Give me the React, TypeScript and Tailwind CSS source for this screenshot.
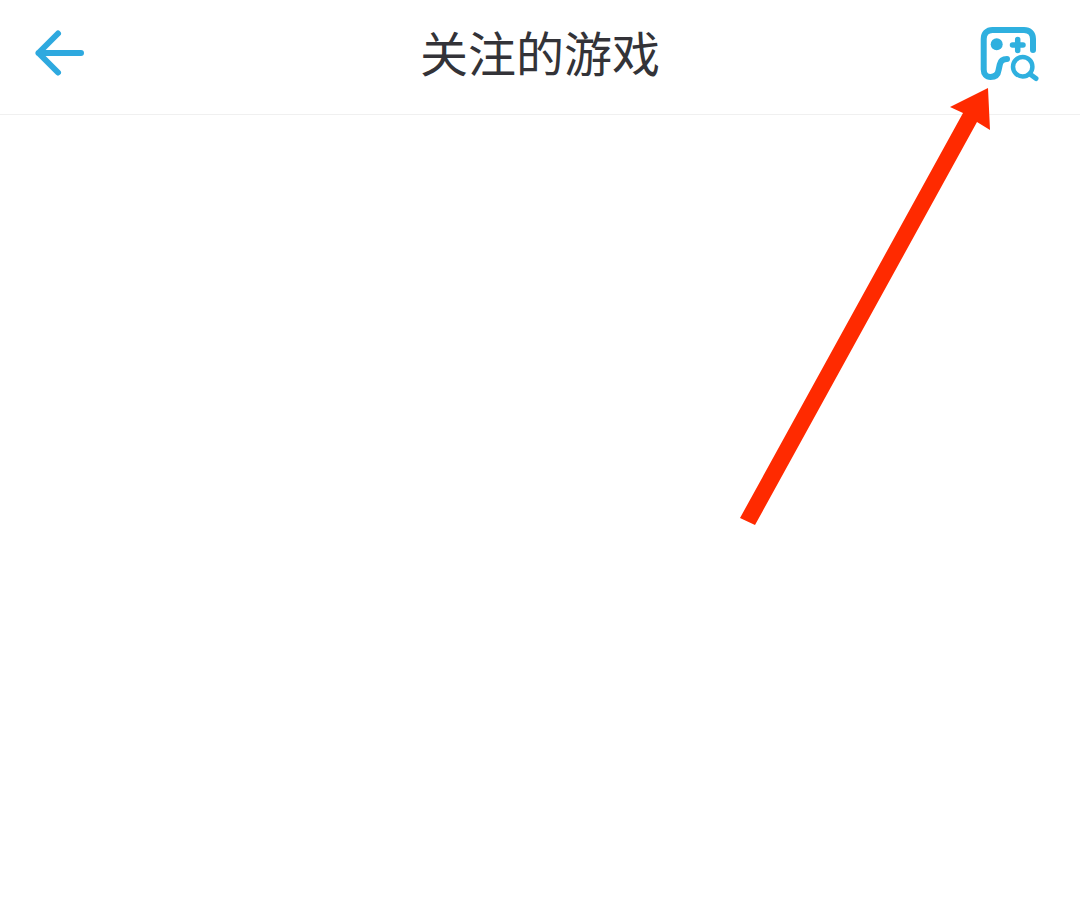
export default function App() {
  return (
    <div className="relative h-[918px] w-[1080px] overflow-hidden bg-white font-['Noto_Sans_CJK_SC','Liberation_Sans',sans-serif]">
      <header className="grid h-[115px] grid-cols-[1fr_auto_1fr] items-center border-b border-[#f0f0f0] px-[38px]">
        <svg width="56" height="56" viewBox="0 0 56 56" fill="none" className="-ml-[6px] -mt-[4px]">
          <path
            d="M6.5 26H49M26 6.5 6.5 26 26 45.5"
            stroke="#2ea9df"
            strokeWidth="6"
            strokeLinecap="round"
            strokeLinejoin="round"
          />
        </svg>
        <h1 className="-mt-[13px] text-[48px] leading-none text-[#333338]">关注的游戏</h1>
        <svg width="64" height="64" viewBox="0 0 64 64" fill="none" className="mt-[2px] justify-self-end">
          <path
            d="M55 24V13C55 7.5 51.5 4 46 4H14.5C9 4 5.7 7.5 5.7 13V43.5C5.7 48 8.5 51 12.5 51C17 51 20 48.5 20.6 44L21.8 38.5C22.5 35 25 33 29 33"
            stroke="#2fb0df"
            strokeWidth="6"
            strokeLinecap="round"
            strokeLinejoin="round"
          />
          <circle cx="18.7" cy="18.3" r="6" fill="#2fb0df" />
          <path d="M34.5 19H45M39.7 13.5V24.5" stroke="#2fb0df" strokeWidth="5.5" strokeLinecap="round" />
          <circle cx="44.7" cy="40.7" r="9.7" stroke="#2fb0df" strokeWidth="4.5" />
          <path d="M52.5 48.5 58 52.5" stroke="#2fb0df" strokeWidth="5" strokeLinecap="round" />
        </svg>
      </header>
      <svg width="1080" height="918" viewBox="0 0 1080 918" className="absolute left-0 top-0">
        <polygon
          points="740,518 963,113 950,107 988,88 990,130 977,122 755,525"
          fill="#ff2a00"
        />
      </svg>
    </div>
  );
}
